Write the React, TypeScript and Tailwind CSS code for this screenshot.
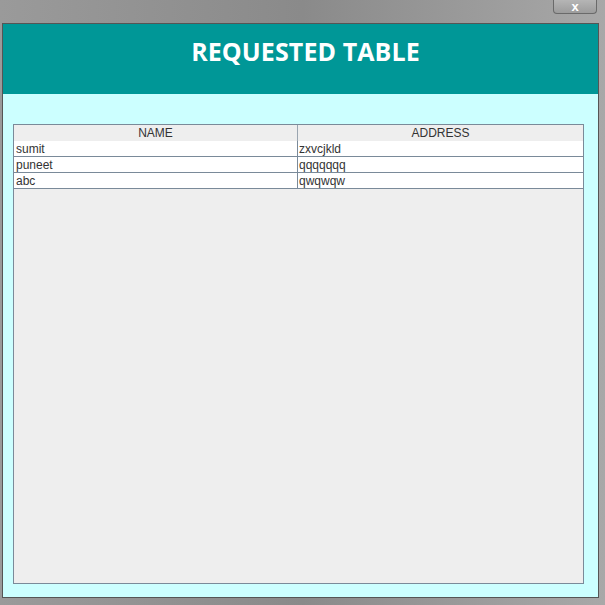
import React from "react";

const rows = [
  { name: "sumit", address: "zxvcjkld" },
  { name: "puneet", address: "qqqqqqq" },
  { name: "abc", address: "qwqwqw" },
];

function App() {
  return (
    <div className="w-[605px] h-[605px] flex flex-col bg-gradient-to-r from-[#9a9a9a] via-[#8a8a8a] to-[#a8a8a8] overflow-hidden">
      {/* title bar */}
      <div className="h-[23px] flex justify-end pr-[8px]">
        <button className="w-[44px] h-[14px] border border-t-0 border-[#6a6a6a] rounded-b-[4px] bg-gradient-to-b from-[#b5b5b5] to-[#9c9c9c] flex items-center justify-center text-white text-[13px] font-bold leading-none font-['Liberation_Sans',sans-serif]">
          x
        </button>
      </div>

      {/* window body */}
      <div className="flex-1 flex flex-col pl-[2px] pr-[6px] pb-[7px]">
        <div className="flex-1 flex flex-col border border-[#555] bg-[#ccffff]">
          <div className="h-[70px] bg-[#009797] flex items-center justify-center">
            <h1 className="text-white text-[25px] font-bold tracking-[0.1px] font-['Open_Sans',sans-serif] mb-[14px] ml-[10px]">
              REQUESTED TABLE
            </h1>
          </div>

          <div className="flex-1 flex flex-col pl-[10px] pr-[14px] pt-[30px] pb-[13px]">
            <div className="flex-1 flex flex-col border border-[#7a8a99] bg-[#eeeeee] font-['Liberation_Sans',sans-serif] text-[12px] text-[#333]">
              <div className="grid grid-cols-[284px_1fr] h-[16px] leading-[16px] border-b border-[#7a8a99]">
                <div className="text-center border-r border-[#9aa5b0] bg-[#eeeeee]">NAME</div>
                <div className="text-center bg-[#eeeeee]">ADDRESS</div>
              </div>
              {rows.map((r) => (
                <div
                  key={r.name}
                  className="grid grid-cols-[284px_1fr] h-[16px] leading-[16px] bg-white border-b border-[#7a8a99]"
                >
                  <div className="pl-[2px] border-r border-[#7a8a99]">{r.name}</div>
                  <div className="pl-[1px]">{r.address}</div>
                </div>
              ))}
            </div>
          </div>
        </div>
      </div>
    </div>
  );
}

export default App;
